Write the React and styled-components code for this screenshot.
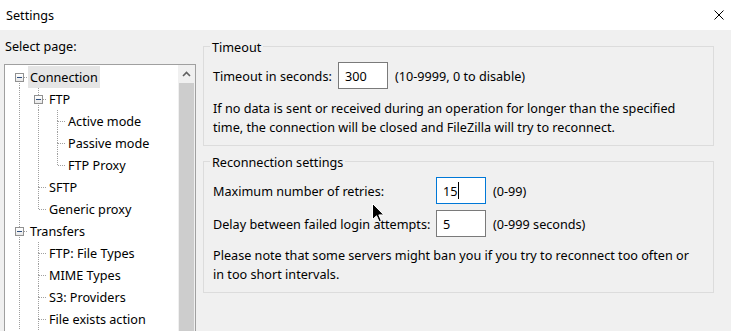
import React from 'react';
import styled, { createGlobalStyle } from 'styled-components';

const GlobalStyle = createGlobalStyle`
  html, body {
    margin: 0;
    padding: 0;
    background: #f0f0f0;
  }
  body {
    font-family: "Noto Sans", "Open Sans", sans-serif;
    font-size: 12.65px;
    color: #000;
  }
`;

const Window = styled.div`
  position: relative;
  width: 731px;
  height: 331px;
  overflow: hidden;
  display: flex;
  flex-direction: column;
  background: #f0f0f0;
`;

const TitleBar = styled.div`
  flex: none;
  height: 30px;
  display: flex;
  align-items: center;
  justify-content: space-between;
  padding: 0 7px 0 6px;
  background: #fff;
`;

const Title = styled.span`
  line-height: 16px;
`;

const Body = styled.div`
  flex: 1;
  min-height: 0;
  display: flex;
  align-items: flex-start;
`;

const Sidebar = styled.div`
  flex: none;
  width: 192px;
  margin-left: 4px;
  display: flex;
  flex-direction: column;
`;

const SideLabel = styled.div`
  line-height: 16px;
  margin: 8px 0 10px 1px;
`;

const TreeBox = styled.div`
  height: 300px;
  display: flex;
  border: 1px solid #a0a0a0;
  background: #fff;
`;

const TreeList = styled.div`
  flex: 1;
  padding: 1px 0 0 5px;
`;

const Row = styled.div`
  display: flex;
  height: 22px;
`;

const dotsDown = 'repeating-linear-gradient(to bottom, #a0a0a0 0 1px, transparent 1px 2px)';
const dotsRight = 'repeating-linear-gradient(to right, #a0a0a0 0 1px, transparent 1px 2px)';

const Guide = styled.div`
  flex: none;
  width: 19px;
  background-image: ${({ $line }) => ($line ? dotsDown : 'none')};
  background-size: 1px 100%;
  background-position: 9px 0;
  background-repeat: no-repeat;
`;

const Connector = styled.div`
  position: relative;
  flex: none;
  width: 18px;
  background-image: ${dotsRight}, ${({ $top }) => ($top ? dotsDown : 'none')},
    ${({ $bottom }) => ($bottom ? dotsDown : 'none')};
  background-size: 8px 1px, 1px 11px, 1px 11px;
  background-position: 10px 11px, 9px 0, 9px 11px;
  background-repeat: no-repeat;
`;

const Expander = styled.span`
  position: absolute;
  left: 5px;
  top: 7px;
  width: 9px;
  height: 9px;
  box-sizing: border-box;
  border: 1px solid #919191;
  background: linear-gradient(#fff, #e8e8e8);

  &::after {
    content: '';
    position: absolute;
    left: 1px;
    top: 3px;
    width: 5px;
    height: 1px;
    background: #2f4f7f;
  }
`;

const NodeLabel = styled.span`
  line-height: 22px;
  padding: 0 2px;
  white-space: nowrap;
  background: ${({ $selected }) => ($selected ? '#e5e5e5' : 'transparent')};
`;

const Scrollbar = styled.div`
  flex: none;
  width: 17px;
  display: flex;
  flex-direction: column;
  background: #f0f0f0;
`;

const ScrollButton = styled.div`
  height: 17px;
  display: flex;
  align-items: center;
  justify-content: center;
`;

const Thumb = styled.div`
  flex: 1;
  margin: 1px 1px 0;
  background: #cdcdcd;
`;

const Content = styled.div`
  flex: 1;
  padding: 0 17px 0 7px;
`;

const Group = styled.fieldset`
  margin: ${({ $top }) => $top}px 0 0;
  padding: 7px 10px 8px 9px;
  min-width: 0;
  border: 1px solid #dcdcdc;
`;

const Legend = styled.legend`
  line-height: 16px;
  padding: 2px 2px 0;
  margin-left: -3px;
`;

const FieldRow = styled.div`
  display: flex;
  align-items: center;
  height: 27px;
  margin-top: ${({ $top }) => $top || 0}px;
`;

const FieldLabel = styled.span`
  flex: none;
  width: ${({ $width }) => $width}px;
  white-space: nowrap;
`;

const Field = styled.div`
  flex: none;
  width: 50px;
  height: 27px;
  box-sizing: border-box;
  padding-left: 6px;
  display: flex;
  align-items: center;
  background: #fff;
  border: 1px solid ${({ $focused }) => ($focused ? '#0078d7' : '#7a7a7a')};
`;

const Caret = styled.span`
  display: inline-block;
  width: 1px;
  height: 17px;
  margin-left: 1px;
  background: #000;
`;

const Hint = styled.span`
  margin-left: 7px;
  white-space: nowrap;
`;

const Note = styled.p`
  margin: ${({ $top }) => $top}px 0 0;
  line-height: 19px;
  white-space: nowrap;
`;

const Pointer = styled.svg`
  position: absolute;
  left: 372px;
  top: 203px;
`;

const tree = [
  { label: 'Connection', guides: [], top: false, next: true, expander: true, selected: true },
  { label: 'FTP', guides: [true], top: true, next: true, expander: true },
  { label: 'Active mode', guides: [true, true], top: true, next: true },
  { label: 'Passive mode', guides: [true, true], top: true, next: true },
  { label: 'FTP Proxy', guides: [true, true], top: true, next: false },
  { label: 'SFTP', guides: [true], top: true, next: true },
  { label: 'Generic proxy', guides: [true], top: true, next: false },
  { label: 'Transfers', guides: [], top: true, next: true, expander: true },
  { label: 'FTP: File Types', guides: [true], top: true, next: true },
  { label: 'MIME Types', guides: [true], top: true, next: true },
  { label: 'S3: Providers', guides: [true], top: true, next: true },
  { label: 'File exists action', guides: [true], top: true, next: true },
];

const App = () => {
  return (
    <Window>
      <GlobalStyle />
      <TitleBar>
        <Title>Settings</Title>
        <svg width="10" height="10" viewBox="0 0 10 10">
          <path d="M0.5 0.5 L9.5 9.5 M9.5 0.5 L0.5 9.5" stroke="#000" strokeWidth="1" />
        </svg>
      </TitleBar>

      <Body>
        <Sidebar>
          <SideLabel>Select page:</SideLabel>
          <TreeBox>
            <TreeList>
              {tree.map((node) => (
                <Row key={node.label}>
                  {node.guides.map((line, i) => (
                    <Guide key={i} $line={line} />
                  ))}
                  <Connector $top={node.top} $bottom={node.next}>
                    {node.expander && <Expander />}
                  </Connector>
                  <NodeLabel $selected={node.selected}>{node.label}</NodeLabel>
                </Row>
              ))}
            </TreeList>
            <Scrollbar>
              <ScrollButton>
                <svg width="9" height="6" viewBox="0 0 9 6">
                  <path d="M1 5 L4.5 1.5 L8 5" fill="none" stroke="#606060" strokeWidth="1.6" />
                </svg>
              </ScrollButton>
              <Thumb />
            </Scrollbar>
          </TreeBox>
        </Sidebar>

        <Content>
          <Group $top={7}>
            <Legend>Timeout</Legend>
            <FieldRow>
              <FieldLabel $width={125}>Timeout in seconds:</FieldLabel>
              <Field>300</Field>
              <Hint>(10-9999, 0 to disable)</Hint>
            </FieldRow>
            <Note $top={10}>
              If no data is sent or received during an operation for longer than the specified
              <br />
              time, the connection will be closed and FileZilla will try to reconnect.
            </Note>
          </Group>

          <Group $top={6}>
            <Legend>Reconnection settings</Legend>
            <FieldRow>
              <FieldLabel $width={223}>Maximum number of retries:</FieldLabel>
              <Field $focused>
                15<Caret />
              </Field>
              <Hint>(0-99)</Hint>
            </FieldRow>
            <FieldRow $top={6}>
              <FieldLabel $width={223}>Delay between failed login attempts:</FieldLabel>
              <Field>5</Field>
              <Hint>(0-999 seconds)</Hint>
            </FieldRow>
            <Note $top={9}>
              Please note that some servers might ban you if you try to reconnect too often or
              <br />
              in too short intervals.
            </Note>
          </Group>
        </Content>
      </Body>

      <Pointer width="13" height="20" viewBox="0 0 13 20">
        <path
          d="M0.5 0.5 L0.5 16.5 L4.5 12.8 L7.2 18.8 L9.4 17.8 L6.8 11.9 L11.8 11.9 Z"
          fill="#000"
          stroke="#fff"
          strokeWidth="1"
        />
      </Pointer>
    </Window>
  );
};

export default App;
